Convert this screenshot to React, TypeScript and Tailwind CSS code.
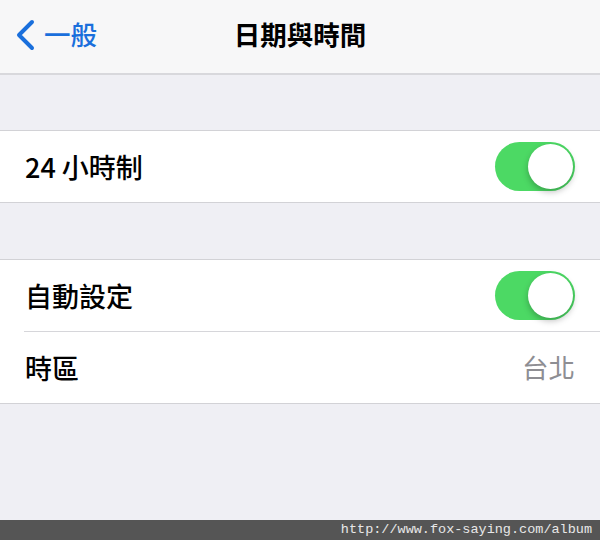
import React from "react";

const cjk = { fontFamily: '"Noto Sans CJK TC", "Noto Sans", sans-serif' };

function Toggle() {
  return (
    <div className="relative h-[49px] w-[80px] rounded-full bg-[#4cd964]">
      <div className="absolute right-[2px] top-[2px] h-[45px] w-[45px] rounded-full bg-white shadow-[0_3px_6px_rgba(0,0,0,0.25)]" />
    </div>
  );
}

function Row({ label, children }: { label: string; children?: React.ReactNode }) {
  return (
    <div className="flex h-[71px] items-center justify-between pl-[25px] pr-[25px]">
      <span className="text-[27px] font-medium leading-none text-black">{label}</span>
      {children}
    </div>
  );
}

export default function App() {
  return (
    <div className="flex h-[540px] w-[600px] flex-col bg-[#efeff4]" style={cjk}>
      {/* nav bar */}
      <div className="relative flex h-[75px] items-center justify-center border-b-2 border-[#d8d8dc] bg-[#f7f7f8]">
        <div className="absolute left-[14px] top-0 flex h-full items-center gap-[8px] pb-[4px] text-[#1a6fdc]">
          <svg width="22" height="32" viewBox="0 0 22 32" fill="none">
            <path d="M18 3 L5 16 L18 29" stroke="currentColor" strokeWidth="4" strokeLinecap="round" strokeLinejoin="round" />
          </svg>
          <span className="text-[26.5px] font-medium leading-none">一般</span>
        </div>
        <span className="pb-[4px] text-[26.5px] font-bold leading-none text-black">日期與時間</span>
      </div>

      <div className="h-[55px]" />

      <div className="border-y border-[#d2d2d6] bg-white">
        <Row label="24 小時制">
          <Toggle />
        </Row>
      </div>

      <div className="h-[56px]" />

      <div className="border-y border-[#d2d2d6] bg-white">
        <Row label="自動設定">
          <Toggle />
        </Row>
        <div className="ml-[24px] h-px bg-[#d6d6da]" />
        <Row label="時區">
          <span className="text-[26.5px] leading-none text-[#8e8e93]">台北</span>
        </Row>
      </div>

      <div className="flex-1" />

      <div className="flex h-[20px] items-center justify-end bg-[#555555] pr-[8px]">
        <span
          className="text-[13.5px] leading-none text-[#e8e8e8]"
          style={{ fontFamily: '"Liberation Mono", monospace' }}
        >
          http://www.fox-saying.com/album
        </span>
      </div>
    </div>
  );
}
